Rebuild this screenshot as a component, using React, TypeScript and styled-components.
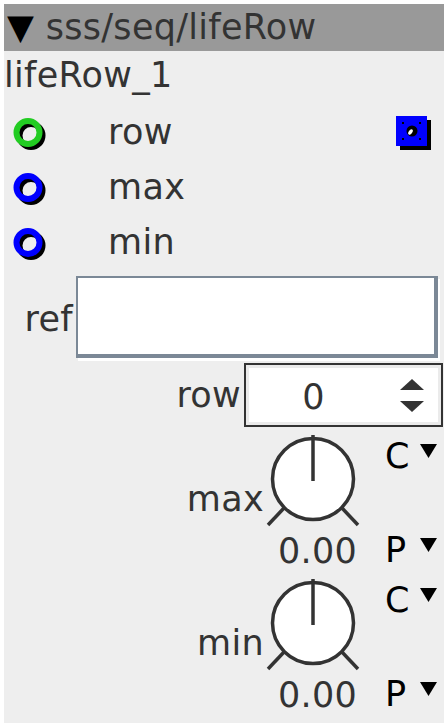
import React from "react";
import styled, { createGlobalStyle } from "styled-components";

const GlobalStyle = createGlobalStyle`
  html, body { margin: 0; padding: 0; background: #ffffff; }
  body { font-family: "DejaVu Sans", "Noto Sans", sans-serif; }
`;

const Panel = styled.div`
  margin: 4px;
  width: 440px;
  height: 719px;
  background: #eeeeee;
  color: #333333;
  font-size: 35px;
  letter-spacing: 0.3px;
  line-height: 40px;
  display: flex;
  flex-direction: column;
  overflow: hidden;
`;

const TitleBar = styled.div`
  height: 47px;
  background: #999999;
  display: flex;
  align-items: center;
  padding-left: 3px;
  white-space: pre;
`;

const Caret = styled.span`
  color: #000;
`;

const NameRow = styled.div`
  height: 54px;
  box-sizing: border-box;
  padding: 4px 0 0 0;
`;

const PortRow = styled.div`
  height: 55px;
  display: flex;
  align-items: center;
  padding: 0 12px 0 9px;
`;

const PortLabel = styled.span`
  margin-left: 59px;
`;

const PortSquare = styled.svg`
  margin-left: auto;
  display: block;
`;

const RefRow = styled.div`
  height: 92px;
  box-sizing: border-box;
  display: flex;
  justify-content: flex-end;
  align-items: flex-start;
  padding: 6px 6px 0 0;
  gap: 3px;
`;

const RefLabel = styled.span`
  margin-top: 23px;
`;

const TextField = styled.div`
  width: 362px;
  height: 82px;
  box-sizing: border-box;
  background: #ffffff;
  border-style: solid;
  border-color: #7b8896;
  border-width: 2px 4px 4px 2px;
  box-shadow: 2px 3px 0 #ffffff;
`;

const SpinRow = styled.div`
  height: 64px;
  margin-top: 2px;
  display: flex;
  justify-content: flex-end;
  align-items: center;
  padding-right: 1px;
  gap: 3px;
`;

const SpinBox = styled.div`
  width: 199px;
  height: 64px;
  box-sizing: border-box;
  border: 2px solid #333333;
  background: #ffffff;
  box-shadow: inset 0 0 0 3px #ebebeb;
  display: flex;
  align-items: center;
`;

const SpinValue = styled.span`
  flex: 1;
  text-align: center;
  padding-top: 4px;
`;

const SpinArrows = styled.svg`
  display: block;
  margin-right: 16px;
  margin-left: 18px;
  margin-top: 2px;
`;

const KnobBlock = styled.div<{ $top: number }>`
  height: 144px;
  margin-top: ${(p) => p.$top}px;
  display: grid;
  grid-template-columns: auto 98px 75px;
  justify-content: end;
  padding-right: 7px;
`;

const KnobLabel = styled.span`
  margin-top: 44px;
`;

const KnobCol = styled.div`
  display: flex;
  flex-direction: column;
`;

const KnobValue = styled.span`
  padding-left: 14px;
`;

const ModeCol = styled.div`
  display: flex;
  flex-direction: column;
  gap: 54px;
  padding: 1px 0 0 23px;
  color: #000;
`;

const ModeLabel = styled.div`
  display: flex;
  justify-content: space-between;
  align-items: flex-start;
`;

const ModeCaret = styled.svg`
  display: block;
  margin-top: 8px;
`;

const Ring: React.FC<{ color: string }> = ({ color }) => (
  <svg width="36" height="36" viewBox="0 0 36 36" style={{ display: "block" }}>
    <circle cx="18" cy="21.5" r="11.5" fill="none" stroke="#000" strokeWidth="6" />
    <circle cx="15" cy="18.5" r="11.5" fill="none" stroke={color} strokeWidth="6" />
  </svg>
);

const Square: React.FC = () => (
  <PortSquare width="36" height="36" viewBox="0 0 36 36">
    <rect x="4" y="6" width="31" height="30" fill="#000" />
    <rect x="0" y="2" width="31" height="30" fill="#0000ff" />
    <rect x="6" y="8" width="2" height="2" fill="#000" />
    <rect x="23" y="8" width="2" height="2" fill="#000" />
    <rect x="6" y="24" width="2" height="2" fill="#000" />
    <rect x="23" y="24" width="2" height="2" fill="#000" />
    <circle cx="16" cy="17" r="5.5" fill="#000" />
    <ellipse cx="14.5" cy="18" rx="1.8" ry="3" transform="rotate(35 14.5 18)" fill="#fff" />
  </PortSquare>
);

const Knob: React.FC = () => (
  <svg width="98" height="96" viewBox="0 0 98 96" style={{ display: "block" }}>
    <circle cx="49" cy="44" r="40.5" fill="#fff" stroke="#333" strokeWidth="3.5" />
    <line x1="49" y1="0" x2="49" y2="46" stroke="#333" strokeWidth="3.5" />
    <line x1="4" y1="90" x2="20" y2="73" stroke="#333" strokeWidth="3.5" />
    <line x1="78" y1="73" x2="94" y2="90" stroke="#333" strokeWidth="3.5" />
  </svg>
);

const ModeArrow: React.FC = () => (
  <ModeCaret width="17" height="14" viewBox="0 0 17 14">
    <polygon points="0,0 17,0 8.5,14" fill="#000" />
  </ModeCaret>
);

const KnobRow: React.FC<{ label: string; top: number }> = ({ label, top }) => (
  <KnobBlock $top={top}>
    <KnobLabel>{label}</KnobLabel>
    <KnobCol>
      <Knob />
      <KnobValue>0.00</KnobValue>
    </KnobCol>
    <ModeCol>
      <ModeLabel>
        <span>C</span>
        <ModeArrow />
      </ModeLabel>
      <ModeLabel>
        <span>P</span>
        <ModeArrow />
      </ModeLabel>
    </ModeCol>
  </KnobBlock>
);

export default function App() {
  return (
    <>
      <GlobalStyle />
      <Panel>
        <TitleBar>
          <Caret>▼</Caret>
          <span> sss/seq/lifeRow</span>
        </TitleBar>
        <NameRow>lifeRow_1</NameRow>
        <PortRow>
          <Ring color="#22cc22" />
          <PortLabel>row</PortLabel>
          <Square />
        </PortRow>
        <PortRow>
          <Ring color="#0000ff" />
          <PortLabel>max</PortLabel>
        </PortRow>
        <PortRow>
          <Ring color="#0000ff" />
          <PortLabel>min</PortLabel>
        </PortRow>
        <RefRow>
          <RefLabel>ref</RefLabel>
          <TextField />
        </RefRow>
        <SpinRow>
          <span>row</span>
          <SpinBox>
            <SpinValue>0</SpinValue>
            <SpinArrows width="26" height="34" viewBox="0 0 26 34">
              <polygon points="1,11 13,0 25,11" fill="#333" />
              <polygon points="1,22 25,22 13,33" fill="#333" />
            </SpinArrows>
          </SpinBox>
        </SpinRow>
        <KnobRow label="max" top={8} />
        <KnobRow label="min" top={0} />
      </Panel>
    </>
  );
}
